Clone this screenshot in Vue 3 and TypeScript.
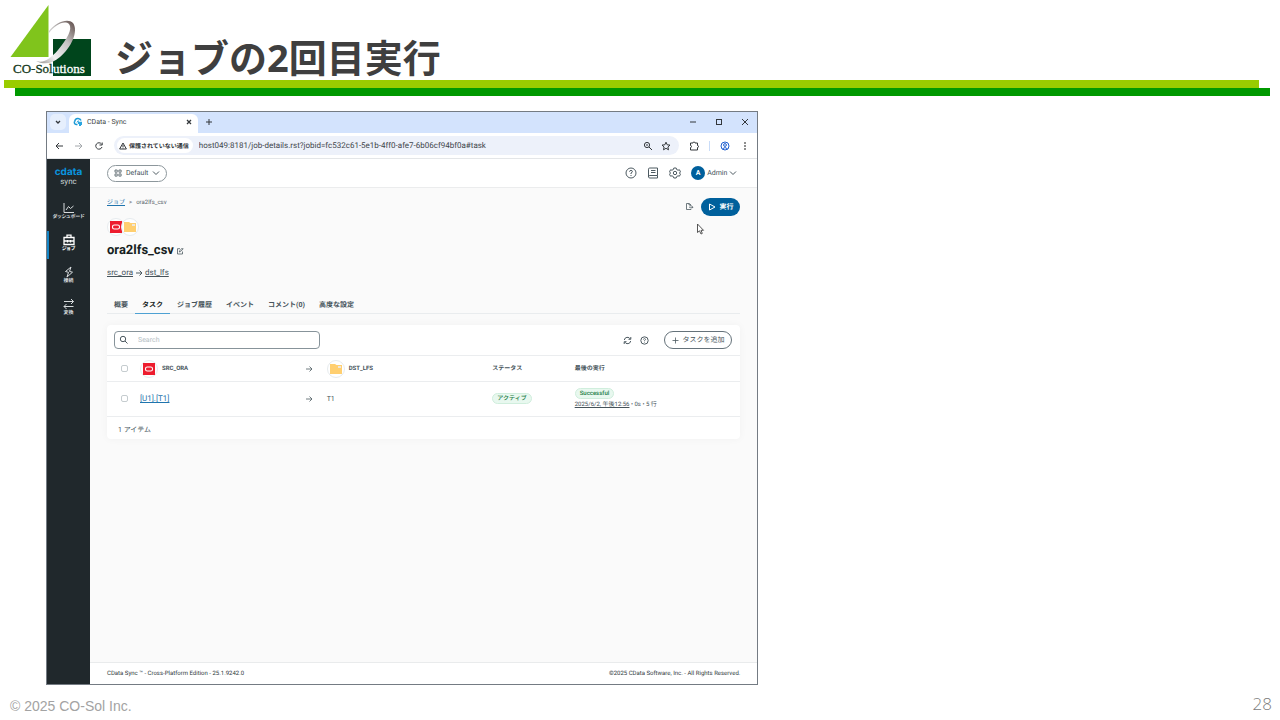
<script setup lang="ts">
import { ref } from 'vue'

interface NavItem {
  id: string
  label: string
}

interface Task {
  source: string
  target: string
  status: string
  result: string
  lastRun: string
  detail: string
}

const nav: NavItem[] = [
  { id: 'dashboard', label: 'ダッシュボード' },
  { id: 'jobs', label: 'ジョブ' },
  { id: 'connections', label: '接続' },
  { id: 'transforms', label: '変換' },
]
const activeNav = ref('jobs')

const tabs: string[] = ['概要', 'タスク', 'ジョブ履歴', 'イベント', 'コメント(0)', '高度な設定']
const activeTab = ref('タスク')

const tasks: Task[] = [
  {
    source: '[U1].[T1]',
    target: 'T1',
    status: 'アクティブ',
    result: 'Successful',
    lastRun: '2025/6/2, 午後12:56',
    detail: ' • 0s • 5 行',
  },
]

const query = ref('')
const address = ref('host049:8181/job-details.rst?jobid=fc532c61-5e1b-4ff0-afe7-6b06cf94bf0a#task')
</script>

<template>
  <div class="slide">
    <header class="slide-head">
      <svg class="logo" viewBox="0 0 81 72" role="img" aria-label="CO-Solutions">
        <defs>
          <linearGradient id="ring" x1="0" y1="1" x2="1" y2="0">
            <stop offset="0" stop-color="#8a8583" />
            <stop offset="0.3" stop-color="#f2f2f2" />
            <stop offset="0.65" stop-color="#c4c2c2" />
            <stop offset="1" stop-color="#5a4744" />
          </linearGradient>
        </defs>
        <rect x="43" y="35" width="38" height="37" fill="#00451c" />
        <path d="M38.500 1V53H0.500Z" fill="#80c41c" />
        <path d="M39 27C46 18 58 14 63 19C69 27 61 44 50 53C42 60 34 61 26 57C34 60 41 54 48 46C57 35 63 25 59 20C54 16 45 21 39 29Z" fill="url(#ring)" />
        <text x="3" y="69" class="logo-text" fill="#173b22" stroke="#173b22">CO-Sol</text>
        <text x="43" y="69" class="logo-text" fill="#ffffff" stroke="#ffffff">utions</text>
      </svg>
      <h1>ジョブの2回目実行</h1>
    </header>
    <div class="bar lime"></div>
    <div class="bar green"></div>

    <main class="stage">
      <section class="window">
        <div class="tabstrip">
          <button class="tabs-menu" aria-label="Search tabs">
            <svg viewBox="0 0 8 8" width="8" height="8"><path d="M2 3L4 5L6 3" class="ln dark bold" /></svg>
          </button>
          <div class="browser-tab">
            <svg viewBox="0 0 10 10" width="10" height="10">
              <path d="M4.500 7.500H3.200A2 2 0 0 1 1.800 4.200A3.200 3.200 0 0 1 8 3.600" fill="none" stroke="#1c9ad6" stroke-width="1.500" />
              <path d="M4 5.500A1.800 1.800 0 0 1 6 4" fill="none" stroke="#1c9ad6" />
              <path d="M5 4.800H9V8H8V9H6V7H5Z" fill="#2ba6e0" />
            </svg>
            <span>CData - Sync</span>
            <button aria-label="Close tab">
              <svg viewBox="0 0 8 8" width="8" height="8"><path d="M2 2L6 6M6 2L2 6" class="ln dark bold" /></svg>
            </button>
          </div>
          <button class="new-tab" aria-label="New tab">
            <svg viewBox="0 0 8 8" width="8" height="8"><path d="M4 1V7M1 4H7" class="ln dark" /></svg>
          </button>
          <div class="win-controls">
            <button aria-label="Minimize"><svg viewBox="0 0 8 8" width="8" height="8"><path d="M1 4H7" class="ln dark" /></svg></button>
            <button aria-label="Maximize"><svg viewBox="0 0 8 8" width="8" height="8"><rect x="1.500" y="1.500" width="5" height="5" class="ln dark" /></svg></button>
            <button aria-label="Close"><svg viewBox="0 0 8 8" width="8" height="8"><path d="M1 1L7 7M7 1L1 7" class="ln dark" /></svg></button>
          </div>
        </div>

        <div class="toolbar">
          <button aria-label="Back"><svg viewBox="0 0 10 10" width="10" height="10"><path d="M9 5H2M5 2L2 5L5 8" class="ln dark" /></svg></button>
          <button aria-label="Forward"><svg viewBox="0 0 10 10" width="10" height="10"><path d="M1 5H8M5 2L8 5L5 8" class="ln pale" /></svg></button>
          <button aria-label="Reload"><svg viewBox="0 0 10 10" width="10" height="10"><path d="M8 6A3.200 3.200 0 1 1 7.500 3M8.200 1.500V4H5.500" class="ln dark" /></svg></button>
          <div class="omnibox">
            <button class="chip">
              <svg viewBox="0 0 8 8" width="8" height="8"><path d="M4 1L7.400 7H0.600ZM4 3V5M4 5.600V6.400" class="ln dark" /></svg>
              保護されていない通信
            </button>
            <input v-model="address" type="text" aria-label="Address" />
            <button aria-label="Zoom"><svg viewBox="0 0 10 10" width="10" height="10"><circle cx="4" cy="4" r="2.600" class="ln dark" /><path d="M6 6L9 9M3 4H5" class="ln dark" /></svg></button>
            <button aria-label="Bookmark"><svg viewBox="0 0 10 10" width="10" height="10"><path d="M5 1.200L6.200 3.800L9 4.100L6.900 6L7.500 8.800L5 7.300L2.500 8.800L3.100 6L1 4.100L3.800 3.800Z" class="ln dark" /></svg></button>
          </div>
          <div class="browser-actions">
            <button aria-label="Extensions"><svg viewBox="0 0 10 10" width="10" height="10"><path d="M1.500 2H4A1 1 0 0 1 6 2H8.500V4.500A1 1 0 0 1 8.500 6.500V9H1.500V6.500A1 1 0 0 0 1.500 4.500Z" class="ln dark" /></svg></button>
            <i></i>
            <button aria-label="Profile"><svg viewBox="0 0 10 10" width="10" height="10"><circle cx="5" cy="5" r="4" class="ln blue" /><circle cx="5" cy="4" r="1.400" class="ln blue" /><path d="M2.500 7.800Q5 5.300 7.500 7.800" class="ln blue" /></svg></button>
            <button aria-label="Menu"><svg viewBox="0 0 10 10" width="10" height="10"><circle cx="5" cy="2" r="0.800" /><circle cx="5" cy="5" r="0.800" /><circle cx="5" cy="8" r="0.800" /></svg></button>
          </div>
        </div>

        <div class="app">
          <nav class="sidebar">
            <div class="brand"><b>cdata</b><span>sync</span></div>
            <a v-for="item in nav" :key="item.id" href="#" :class="{ active: item.id === activeNav }" @click.prevent="activeNav = item.id">
              <svg viewBox="0 0 14 12" width="14" height="12">
                <path v-if="item.id === 'dashboard'" d="M2 1V10.500H12M4 8L6.500 4.500L8.500 6.500L11.500 4" />
                <path v-else-if="item.id === 'jobs'" d="M2 3.500H12V10.500H2ZM5 3.500V1.200H9V3.500M2 7H12M5.500 6V8.500M8.500 6V8.500" stroke-width="1.300" />
                <path v-else-if="item.id === 'connections'" d="M9 1L3.500 5.500L6.500 6.300L5 11L10.500 6.200L7.500 5.400Z" />
                <path v-else d="M2 3.500H11.500M9 1L11.500 3.500L9 6M11.500 8.500H2M4.500 6L2 8.500L4.500 11" />
              </svg>
              <span>{{ item.label }}</span>
            </a>
          </nav>

          <div class="page">
            <div class="topbar">
              <button class="workspace">
                <svg viewBox="0 0 8 8" width="8" height="8"><path d="M1 1H3.200V3.200H1ZM4.900 1H7.100V3.200H4.900ZM1 4.900H3.200V7.100H1ZM4.900 4.900H7.100V7.100H4.900Z" class="ln grey thin" /></svg>
                Default
                <svg viewBox="0 0 8 8" width="8" height="8"><path d="M1 2.500L4 5.500L7 2.500" class="ln grey" /></svg>
              </button>
              <div class="top-actions">
                <button aria-label="Help"><svg viewBox="0 0 12 12" width="12" height="12"><circle cx="6" cy="6" r="5" class="ln grey" /><path d="M4.500 4.700Q4.700 3.400 6 3.400Q7.500 3.500 7.400 4.700Q7.300 5.500 6 6V7M6 8V9" class="ln grey" /></svg></button>
                <button aria-label="Documentation"><svg viewBox="0 0 12 12" width="12" height="12"><path d="M1.500 10V2.200Q1.500 1 2.700 1H10.500V8.500H2.800Q1.500 8.700 1.500 9.700Q1.500 11 2.800 11H10.500V8.500M4 3.500H8.500M4 5.500H8.500" class="ln grey" /></svg></button>
                <button aria-label="Settings"><svg viewBox="0 0 12 12" width="12" height="12"><path d="M4.800 1H7.200L7.600 2.500L9 3.200L10.500 2.800L11.500 4.900L10.400 6L11.500 7.200L10.400 9.200L9 8.800L7.600 9.600L7.200 11H4.800L4.400 9.600L3 8.800L1.500 9.200L0.500 7.200L1.600 6L0.500 4.900L1.500 2.800L3 3.200L4.400 2.500Z" class="ln grey" /><circle cx="6" cy="6" r="1.700" class="ln grey" /></svg></button>
                <button class="account">
                  <b>A</b>
                  Admin
                  <svg viewBox="0 0 8 8" width="8" height="8"><path d="M1 2.500L4 5.500L7 2.500" class="ln grey" /></svg>
                </button>
              </div>
            </div>

            <div class="content">
              <div class="job-head">
                <div class="crumbs"><a href="#" @click.prevent>ジョブ</a><span>&gt;</span><span>ora2lfs_csv</span></div>
                <div class="job-actions">
                  <button aria-label="Export"><svg viewBox="0 0 9 9" width="9" height="9"><path d="M6 4V3L4 1.500H1.500V7.500H6V6.500M4 1.500V3H6M4 5.200H7" class="ln grey thin" /><path d="M6.800 3.800L8.500 5.200L6.800 6.600Z" fill="#566168" /></svg></button>
                  <button class="run">
                    <svg viewBox="0 0 8 8" width="8" height="8"><path d="M1.500 1L7 4L1.500 7Z" class="ln white" /></svg>
                    実行
                    <svg class="cursor" viewBox="0 0 9 12" width="9" height="12"><path d="M1.500 1V9.500L3.500 7.800L5 11L6.300 10.400L5 7.300H7.500Z" fill="#fff" stroke="#444" stroke-width="0.900" /></svg>
                  </button>
                </div>
              </div>

              <div class="pair">
                <span class="badge"><svg viewBox="0 0 12 12"><rect width="12" height="12" fill="#ed1c2e" /><rect x="2.500" y="4" width="7" height="4" rx="1.800" fill="none" stroke="#fff" stroke-width="1.100" /></svg></span>
                <span class="badge"><svg viewBox="0 0 12 12"><path d="M0 1H5L6.500 2H12V11H0Z" fill="#ffcf70" /><path d="M8 3H11V5H8Z" fill="#eee7dc" /></svg></span>
              </div>

              <h2>
                ora2lfs_csv
                <button aria-label="Edit name"><svg viewBox="0 0 8 8" width="8" height="8"><path d="M4 1.700H1.500V7H6.500V4.500M3.300 5L3.600 3.900L6.300 1L7.200 1.900L4.400 4.700Z" class="ln grey thin" /></svg></button>
              </h2>

              <div class="route">
                <a href="#" @click.prevent>src_ora</a>
                <svg viewBox="0 0 8 8" width="8" height="8"><path d="M1 4H7M4.500 1.500L7 4L4.500 6.500" class="ln grey" /></svg>
                <a href="#" @click.prevent>dst_lfs</a>
              </div>

              <div class="tabs" role="tablist">
                <button v-for="tab in tabs" :key="tab" role="tab" :aria-selected="tab === activeTab" :class="{ active: tab === activeTab }" @click="activeTab = tab">{{ tab }}</button>
              </div>

              <div class="card">
                <div class="card-tools">
                  <label class="search">
                    <svg viewBox="0 0 10 10" width="10" height="10"><circle cx="4" cy="4" r="2.700" class="ln grey" /><path d="M6 6L8.500 8.500" class="ln grey" /></svg>
                    <input v-model="query" type="text" placeholder="Search" aria-label="Search" />
                  </label>
                  <div class="card-actions">
                    <button aria-label="Refresh"><svg viewBox="0 0 9 9" width="9" height="9"><path d="M1.300 4A3.200 3.200 0 0 1 7.300 3M7.800 1V3.300H5.500M7.700 5A3.200 3.200 0 0 1 1.700 6M1.200 8V5.700H3.500" class="ln grey" /></svg></button>
                    <button aria-label="Task help"><svg viewBox="0 0 9 9" width="9" height="9"><circle cx="4.500" cy="4.500" r="3.700" class="ln grey" /><path d="M3.400 3.600Q3.500 2.600 4.500 2.600Q5.600 2.700 5.500 3.600Q5.400 4.200 4.500 4.500V5.200M4.500 5.900V6.600" class="ln grey thin" /></svg></button>
                    <button class="add"><svg viewBox="0 0 7 7" width="7" height="7"><path d="M3.500 0.500V6.500M0.500 3.500H6.500" class="ln grey thin" /></svg>タスクを追加</button>
                  </div>
                </div>
                <table>
                  <colgroup>
                    <col class="c-check" /><col class="c-name" /><col class="c-arrow" /><col class="c-name" /><col class="c-status" /><col />
                  </colgroup>
                  <thead>
                    <tr>
                      <th><input type="checkbox" aria-label="Select all tasks" /></th>
                      <th>
                        <div class="endpoint">
                          <span class="badge"><svg viewBox="0 0 12 12"><rect width="12" height="12" fill="#ed1c2e" /><rect x="2.500" y="4" width="7" height="4" rx="1.800" fill="none" stroke="#fff" stroke-width="1.100" /></svg></span>SRC_ORA
                        </div>
                      </th>
                      <th><svg viewBox="0 0 8 8" width="8" height="8"><path d="M1 4H7M4.500 1.500L7 4L4.500 6.500" class="ln grey thin" /></svg></th>
                      <th>
                        <div class="endpoint">
                          <span class="badge"><svg viewBox="0 0 12 12"><path d="M0 1H5L6.500 2H12V11H0Z" fill="#ffcf70" /><path d="M8 3H11V5H8Z" fill="#eee7dc" /></svg></span>DST_LFS
                        </div>
                      </th>
                      <th>ステータス</th>
                      <th>最後の実行</th>
                    </tr>
                  </thead>
                  <tbody>
                    <tr v-for="task in tasks" :key="task.source">
                      <td><input type="checkbox" :aria-label="task.source" /></td>
                      <td><a class="task-link" href="#" @click.prevent>{{ task.source }}</a></td>
                      <td><svg viewBox="0 0 8 8" width="8" height="8"><path d="M1 4H7M4.500 1.500L7 4L4.500 6.500" class="ln grey thin" /></svg></td>
                      <td>{{ task.target }}</td>
                      <td><span class="pill">{{ task.status }}</span></td>
                      <td>
                        <div class="last">
                          <span class="pill">{{ task.result }}</span>
                          <div><a href="#" @click.prevent>{{ task.lastRun }}</a>{{ task.detail }}</div>
                        </div>
                      </td>
                    </tr>
                  </tbody>
                </table>
                <div class="count">{{ tasks.length }} アイテム</div>
              </div>
            </div>

            <footer class="app-foot">
              <span>CData Sync ™ - Cross-Platform Edition - 25.1.9242.0</span>
              <span>©2025 CData Software, Inc. - All Rights Reserved.</span>
            </footer>
          </div>
        </div>
      </section>
    </main>

    <footer class="slide-foot">
      <span>© 2025 CO-Sol Inc.</span>
      <span class="page-no">28</span>
    </footer>
  </div>
</template>

<style>
body {
  background: #fff;
}
</style>

<style scoped>
* {
  box-sizing: border-box;
}
.slide {
  min-height: 100vh;
  display: flex;
  flex-direction: column;
  font-family: Roboto, 'Noto Sans CJK JP', sans-serif;
}
button {
  display: flex;
  align-items: center;
  justify-content: center;
  padding: 0;
  border: 0;
  background: none;
  font: inherit;
  color: inherit;
  white-space: nowrap;
}
button,
input {
  text-rendering: inherit;
}
svg {
  display: block;
  flex: none;
}
a {
  color: inherit;
}
.ln {
  fill: none;
  stroke-width: 1;
}
.thin {
  stroke-width: 0.8;
}
.bold {
  stroke-width: 1.3;
}
.dark {
  stroke: #33373b;
}
.pale {
  stroke: #a4a8ac;
}
.grey {
  stroke: #4d5a61;
}
.blue {
  stroke: #1f5fd0;
}
.white {
  stroke: #fff;
}
.slide-head {
  display: flex;
  align-items: flex-start;
  height: 80px;
  padding: 4px 0 0 10px;
  gap: 24px;
}
.logo {
  width: 81px;
  height: 72px;
}
.logo-text {
  font: 13px 'Liberation Serif', serif;
  stroke-width: 0.3;
}
h1 {
  margin: 26px 0 0;
  font: bold 38px/54px 'Noto Sans', 'Noto Sans CJK JP', sans-serif;
  color: #3f3f3f;
}
.bar {
  height: 8px;
}
.lime {
  margin: 0 21px 0 4px;
  background: #9c0;
}
.green {
  margin: 0 10px 0 15px;
  background: #090;
}
.stage {
  flex: 1;
  display: flex;
  padding: 15px 0 0 46px;
}
.window {
  width: calc(60% - 28px);
  display: flex;
  flex-direction: column;
  border: 1px solid #747b83;
  background: #fff;
  text-rendering: geometricPrecision;
}
.tabstrip {
  display: flex;
  align-items: flex-start;
  height: 21px;
  padding: 2px 8px 0 3px;
  background: #d3e3fd;
}
.tabstrip > button {
  height: 16px;
}
.tabs-menu {
  width: 16px;
  border-radius: 5px;
  background: #e6effd;
}
.browser-tab {
  display: flex;
  align-items: center;
  width: 129px;
  height: 19px;
  margin-left: 3px;
  padding: 0 5px 3px 4px;
  gap: 4px;
  border-radius: 6px 6px 0 0;
  background: #fff;
  font-size: 7px;
  line-height: 10px;
  color: #3a3f44;
}
.browser-tab button {
  margin-left: auto;
}
.new-tab {
  margin-left: 7px;
}
.win-controls {
  display: flex;
  gap: 18px;
  height: 16px;
  margin-left: auto;
}
.toolbar {
  display: flex;
  align-items: center;
  height: 26px;
  padding: 0 7px;
  gap: 10px;
  border-bottom: 1px solid #e4e6e8;
}
.omnibox {
  flex: 1;
  display: flex;
  align-items: center;
  height: 19px;
  padding: 0 8px 0 3px;
  gap: 8px;
  border-radius: 10px;
  background: #edf1fa;
}
.chip {
  height: 15px;
  padding: 0 4px 0 2px;
  gap: 2px;
  border-radius: 8px;
  background: #fff;
  font: bold 6px/10px 'Noto Sans CJK JP', sans-serif;
  color: #2c3034;
}
.omnibox input {
  flex: 1;
  min-width: 0;
  padding: 0;
  border: 0;
  margin-left: -2px;
  background: none;
  font: 8px/12px Roboto, sans-serif;
  color: #41464c;
}
.browser-actions {
  display: flex;
  align-items: center;
  gap: 10px;
}
.browser-actions i {
  width: 1px;
  height: 10px;
  background: #c9dcf8;
}
.app {
  flex: 1;
  display: flex;
}
.sidebar {
  width: 43px;
  background: #20282c;
  color: #fff;
}
.brand {
  display: flex;
  flex-direction: column;
  align-items: center;
  height: 40px;
  padding-top: 8px;
  font-size: 8px;
  line-height: 10px;
  color: #c9d0d4;
}
.brand b {
  font: bold 10px/10px Inter, sans-serif;
  color: #0a93dd;
}
.sidebar a {
  display: flex;
  flex-direction: column;
  align-items: center;
  height: 28px;
  margin-bottom: 4px;
  padding-top: 3px;
  border-left: 2px solid transparent;
  border-right: 2px solid transparent;
  font-size: 5px;
  line-height: 6px;
  font-weight: bold;
  font-feature-settings: 'palt';
  text-decoration: none;
  white-space: nowrap;
  color: #d7dbdd;
}
.sidebar a.active {
  border-left-color: #1584c4;
  color: #fff;
}
.sidebar path {
  fill: none;
  stroke: currentColor;
}
.page {
  flex: 1;
  min-width: 0;
  display: flex;
  flex-direction: column;
  background: #fafafa;
  color: #46535a;
  font-size: 7px;
  line-height: 10px;
}
.topbar {
  display: flex;
  align-items: center;
  justify-content: space-between;
  height: 29px;
  padding: 0 20px 0 17px;
  border-bottom: 1px solid #ebeced;
  background: #fff;
}
.workspace {
  height: 17px;
  padding: 0 6px;
  gap: 4px;
  border: 1px solid #8d979c;
  border-radius: 9px;
}
.top-actions {
  display: flex;
  align-items: center;
  gap: 10px;
}
.account {
  gap: 2px;
}
.account b {
  width: 14px;
  border-radius: 50%;
  background: #00609c;
  line-height: 14px;
  color: #fff;
}
.content {
  flex: 1;
  padding: 9px 17px 0;
}
.job-head {
  display: flex;
  justify-content: space-between;
  height: 21px;
}
.crumbs {
  display: flex;
  gap: 4px;
  padding-top: 1px;
  font-size: 6px;
  color: #58646a;
}
.crumbs a,
.task-link {
  color: #1f74ad;
}
.job-actions {
  display: flex;
  align-items: center;
  padding-bottom: 2px;
  gap: 7px;
}
.run {
  position: relative;
  height: 18px;
  padding: 0 7px;
  gap: 3px;
  border-radius: 9px;
  background: #00609c;
  font-weight: bold;
  color: #fff;
}
.cursor {
  position: absolute;
  left: -5px;
  top: 25px;
}
.badge {
  display: flex;
  align-items: center;
  justify-content: center;
  width: 18px;
  height: 18px;
  border: 1px solid #e6ebee;
  border-radius: 50%;
  background: #fff;
}
.badge svg {
  width: 12px;
  height: 12px;
}
.pair {
  display: flex;
}
.pair .badge + .badge {
  margin-left: -4px;
}
h2 {
  display: flex;
  align-items: center;
  gap: 2px;
  margin: 7px 0 0;
  font-size: 13px;
  line-height: 16px;
  color: #161d21;
}
.route {
  display: flex;
  align-items: center;
  gap: 2px;
  margin-top: 9px;
  font-size: 8px;
}
.tabs {
  display: flex;
  height: 19px;
  margin-top: 17px;
  border-bottom: 1px solid #e9ecee;
}
.tabs button {
  height: 19px;
  padding: 1px 7px 0;
  border-bottom: 1px solid transparent;
  font-weight: bold;
}
.tabs button.active {
  border-bottom-color: #4ea1d3;
  color: #161d21;
}
.card {
  margin-top: 11px;
  border-radius: 4px;
  background: #fff;
  box-shadow: 0 0 8px #0000000a;
}
.card-tools {
  display: flex;
  align-items: center;
  justify-content: space-between;
  height: 30px;
  padding: 0 8px 0 7px;
}
.search {
  display: flex;
  align-items: center;
  width: calc(33% + 2px);
  height: 18px;
  padding-left: 4px;
  gap: 9px;
  border: 1px solid #87939a;
  border-radius: 4px;
}
.search input {
  flex: 1;
  min-width: 0;
  padding: 0;
  border: 0;
  outline: 0;
  background: none;
  font: inherit;
}
.search input::placeholder {
  color: #b3bec4;
}
.card-actions {
  display: flex;
  align-items: center;
  gap: 8px;
}
.add {
  height: 18px;
  margin-left: 7px;
  padding: 0 7px;
  gap: 3px;
  border: 1px solid #65727a;
  border-radius: 9px;
}
table {
  width: 100%;
  table-layout: fixed;
  border-collapse: collapse;
}
.c-check {
  width: 33px;
}
.c-name {
  width: 26%;
}
.c-arrow {
  width: 22px;
}
.c-status {
  width: 13%;
}
th,
td {
  height: 26px;
  padding: 0;
  border-top: 1px solid #ebedef;
  text-align: left;
  vertical-align: middle;
}
th {
  font-size: 6px;
}
td {
  height: 34px;
}
th:first-child,
td:first-child {
  padding-left: 14px;
}
th:nth-last-child(-n + 2),
td:nth-last-child(-n + 2) {
  padding-left: 1px;
}
input[type='checkbox'] {
  appearance: none;
  display: block;
  width: 7px;
  height: 7px;
  margin: 0;
  border: 1px solid #c5cccf;
  border-radius: 2px;
  background: #fff;
}
.endpoint {
  display: flex;
  align-items: center;
  gap: 4px;
}
.task-link {
  font-size: 8px;
}
.pill {
  display: inline-block;
  padding: 0 4px;
  border: 1px solid #d0eedd;
  border-radius: 6px;
  background: #e8f8ef;
  font-size: 6px;
  line-height: 9px;
  font-weight: 500;
  color: #1d7d47;
}
.last {
  display: flex;
  flex-direction: column;
  align-items: flex-start;
  gap: 1px;
  font-size: 6px;
  white-space: nowrap;
}
.count {
  padding: 8px 11px 4px;
  border-top: 1px solid #ebedef;
}
.app-foot {
  display: flex;
  align-items: center;
  justify-content: space-between;
  height: 22px;
  padding: 0 17px;
  border-top: 1px solid #e9ebec;
  background: #fff;
  font-size: 6px;
  color: #303a40;
}
.slide-foot {
  display: flex;
  align-items: center;
  justify-content: space-between;
  height: 35px;
  padding: 6px 8px 0 10px;
  font: 14px/20px 'Liberation Sans', sans-serif;
  color: #a3a3a3;
}
.page-no {
  padding-bottom: 3px;
  font: 300 17px/20px 'Open Sans', 'Noto Sans', sans-serif;
  color: #7c7c7c;
}
</style>
